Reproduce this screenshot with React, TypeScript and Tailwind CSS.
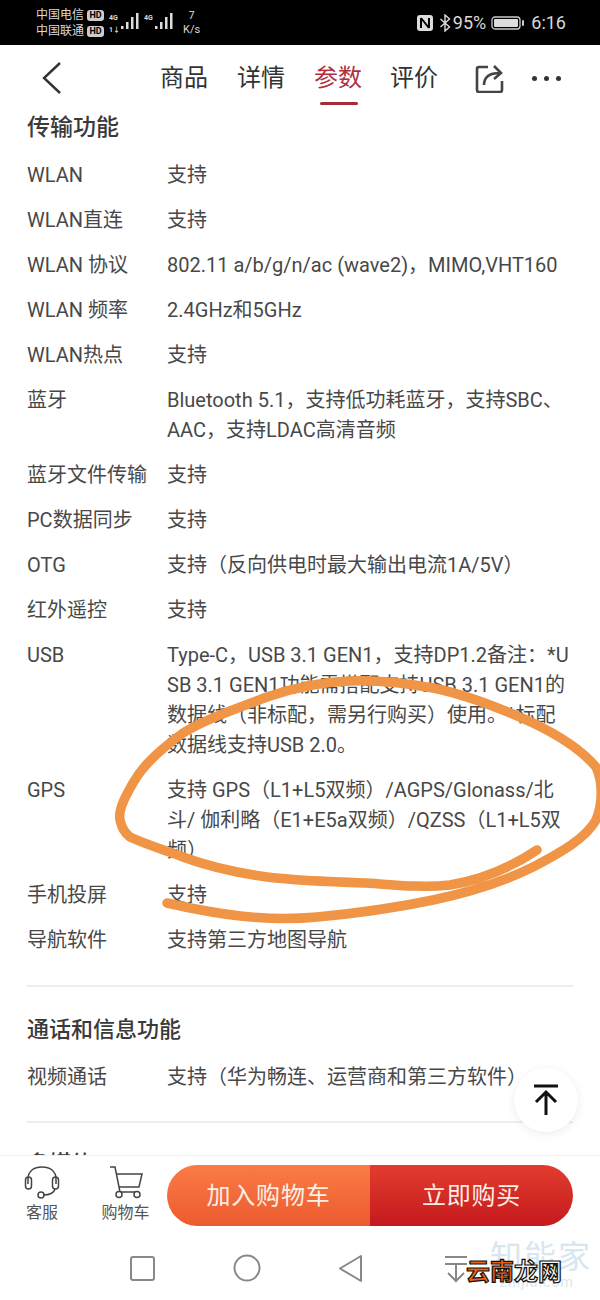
import React from 'react';

interface SpecRow {
  label: string;
  lines: string[];
}

const transferRows: SpecRow[] = [
  { label: 'WLAN', lines: ['支持'] },
  { label: 'WLAN直连', lines: ['支持'] },
  { label: 'WLAN 协议', lines: ['802.11 a/b/g/n/ac (wave2)，MIMO,VHT160'] },
  { label: 'WLAN 频率', lines: ['2.4GHz和5GHz'] },
  { label: 'WLAN热点', lines: ['支持'] },
  { label: '蓝牙', lines: ['Bluetooth 5.1，支持低功耗蓝牙，支持SBC、', 'AAC，支持LDAC高清音频'] },
  { label: '蓝牙文件传输', lines: ['支持'] },
  { label: 'PC数据同步', lines: ['支持'] },
  { label: 'OTG', lines: ['支持（反向供电时最大输出电流1A/5V）'] },
  { label: '红外遥控', lines: ['支持'] },
  {
    label: 'USB',
    lines: [
      'Type-C，USB 3.1 GEN1，支持DP1.2备注：*U',
      'SB 3.1 GEN1功能需搭配支持USB 3.1 GEN1的',
      '数据线（非标配，需另行购买）使用。*标配',
      '数据线支持USB 2.0。',
    ],
  },
  {
    label: 'GPS',
    lines: ['支持 GPS（L1+L5双频）/AGPS/Glonass/北', '斗/ 伽利略（E1+E5a双频）/QZSS（L1+L5双', '频）'],
  },
  { label: '手机投屏', lines: ['支持'] },
  { label: '导航软件', lines: ['支持第三方地图导航'] },
];

const Row: React.FC<{ row: SpecRow }> = ({ row }) => (
  <div className="flex text-[20px] leading-[30px] text-[#484848]">
    <div className="w-[140px] shrink-0 whitespace-nowrap">{row.label}</div>
    <div className="whitespace-nowrap">
      {row.lines.map((line) => (
        <div key={line}>{line}</div>
      ))}
    </div>
  </div>
);

const Signal = () => (
  <svg width="18" height="18" viewBox="0 0 18 18" className="ml-[1px] shrink-0">
    <rect x="0" y="14" width="2.5" height="3" fill="#ddd" />
    <rect x="5" y="10" width="2.5" height="7" fill="#ddd" />
    <rect x="10" y="5" width="2.5" height="12" fill="#ddd" />
    <rect x="15" y="1" width="2.5" height="16" fill="#ddd" />
  </svg>
);

const HdBadge = () => (
  <span className="ml-[3px] inline-block h-[11px] w-[17px] rounded-[3px] bg-[#cccccc] text-center text-[9px] font-bold leading-[11px] text-black">
    HD
  </span>
);

const StatusBar = () => (
  <div className="flex h-[45px] shrink-0 items-center bg-black pl-[36px] pr-[34px] text-[#d8d8d8]">
    <div className="mt-[1px] text-[12px] leading-[16px]">
      <div className="flex items-center">中国电信<HdBadge /></div>
      <div className="flex items-center">中国联通<HdBadge /></div>
    </div>
    <div className="ml-[5px] flex items-start text-[7px] font-bold leading-[8px]">
      <div className="w-[11px] pt-[2px]">
        <div>4G</div>
        <div className="mt-[4px]">1↓</div>
      </div>
      <Signal />
      <span className="ml-[5px] w-[10px] pt-[2px]">4G</span>
      <Signal />
    </div>
    <div className="ml-[10px] text-center text-[11px] leading-[14px]">
      <div>7</div>
      <div>K/s</div>
    </div>
    <div className="ml-auto flex items-center text-[18px]">
      <svg width="18" height="18" viewBox="0 0 18 18" className="mr-[5px]">
        <rect x="1" y="1" width="16" height="16" rx="3" fill="#ddd" />
        <path d="M5 4v10M5 4l8 10M13 4v10" stroke="#000" strokeWidth="2" fill="none" />
      </svg>
      <svg width="12" height="18" viewBox="0 0 12 18" className="mr-[2px]">
        <path d="M1.5 5l9 8-4.5 4V1l4.500 4-9 8" stroke="#ddd" strokeWidth="1.400" fill="none" />
      </svg>
      <span>95%</span>
      <svg width="34" height="14" viewBox="0 0 34 14" className="ml-[5px]">
        <rect x="1" y="1" width="28" height="12" rx="3" fill="none" stroke="#ccc" strokeWidth="1.300" />
        <rect x="3" y="3" width="24" height="8" rx="1" fill="#ddd" />
        <rect x="31" y="4" width="2" height="6" rx="1" fill="#ccc" />
      </svg>
      <span className="ml-[6px]">6:16</span>
    </div>
  </div>
);

const NavBar = () => (
  <div className="flex h-[60px] shrink-0 items-center bg-white pt-[6px] text-[24px] leading-none text-[#333333]">
    <svg width="22" height="34" viewBox="0 0 22 34" className="ml-[41px] shrink-0">
      <path d="M19 2 L3 17 L19 32" fill="none" stroke="#333" strokeWidth="2.400" />
    </svg>
    <span className="ml-[97px]">商品</span>
    <span className="ml-[29px]">详情</span>
    <span className="relative ml-[29px] text-[#b02f3c]">
      参数
      <span className="absolute left-[6px] top-[36px] h-[3px] w-[38px] rounded-full bg-[#a82c38]" />
    </span>
    <span className="ml-[28px]">评价</span>
    <svg width="30" height="30" viewBox="0 0 30 30" className="ml-[36px] shrink-0">
      <path d="M14 4H5a2 2 0 0 0-2 2v21a2 2 0 0 0 2 2h21a2 2 0 0 0 2-2v-9" fill="none" stroke="#444" strokeWidth="2.600" />
      <path d="M10 22c0-8 5-12 16-12M20 3l7 7-7 6" fill="none" stroke="#444" strokeWidth="2.600" />
    </svg>
    <div className="ml-[28px] flex gap-[7px]">
      <span className="h-[5px] w-[5px] rounded-full bg-[#333333]" />
      <span className="h-[5px] w-[5px] rounded-full bg-[#333333]" />
      <span className="h-[5px] w-[5px] rounded-full bg-[#333333]" />
    </div>
  </div>
);

const BottomBar = () => (
  <div className="flex h-[85px] shrink-0 items-start border-t border-[#eef0f6] bg-white pt-[9px]">
    <div className="flex w-[84px] flex-col items-center text-[16px] leading-[20px] text-[#555555]">
      <svg width="36" height="34" viewBox="0 0 36 34">
        <path d="M4 19V14C4 6 10 2 18 2s14 4 14 12v5" fill="none" stroke="#444" strokeWidth="1.500" />
        <rect x="1.500" y="12" width="6" height="12" rx="3" fill="none" stroke="#444" strokeWidth="1.500" />
        <rect x="28.500" y="12" width="6" height="12" rx="3" fill="none" stroke="#444" strokeWidth="1.500" />
        <path d="M31 24c-1 4-6 6-12 6" fill="none" stroke="#444" strokeWidth="1.500" />
        <circle cx="17" cy="30" r="3" fill="none" stroke="#444" strokeWidth="1.500" />
      </svg>
      <span className="mt-[4px]">客服</span>
    </div>
    <div className="flex w-[83px] flex-col items-center text-[16px] leading-[20px] text-[#555555]">
      <svg width="36" height="34" viewBox="0 0 36 34">
        <path d="M2 2h5l5 25h19M9 9h25l-3 13H11" fill="none" stroke="#444" strokeWidth="1.500" />
        <circle cx="11" cy="29.500" r="3" fill="#fff" stroke="#444" strokeWidth="1.500" />
        <circle cx="29" cy="29.500" r="3" fill="#fff" stroke="#444" strokeWidth="1.500" />
      </svg>
      <span className="mt-[4px]">购物车</span>
    </div>
    <div className="flex h-[61px] w-[406px] overflow-hidden rounded-full text-[24px] tracking-[0.8px] text-[#fdeee6]">
      <div className="flex w-[203px] items-center justify-center bg-gradient-to-b from-[#fa7b46] to-[#ec5a2e]">
        加入购物车
      </div>
      <div className="flex w-[203px] items-center justify-center bg-gradient-to-b from-[#e23b2e] to-[#c5181e]">
        立即购买
      </div>
    </div>
  </div>
);

const SystemNav = () => (
  <div className="relative h-[60px] shrink-0 bg-white">
    <svg width="600" height="60" viewBox="0 0 600 60" className="absolute left-0 top-0">
      <rect x="131" y="17" width="23" height="23" rx="2" fill="none" stroke="#888" strokeWidth="2" />
      <circle cx="247" cy="28" r="12.500" fill="none" stroke="#888" strokeWidth="2" />
      <path d="M361 16v25l-21-12.500z" fill="none" stroke="#888" strokeWidth="2" strokeLinejoin="round" />
      <path d="M445 17h22M445 24h22M456 24v16M448 33l8 8 8-8" fill="none" stroke="#888" strokeWidth="2" />
    </svg>
    <div className="absolute left-[490px] top-[1px] text-[32px] leading-none tracking-[2px] text-[#d8e6ee]">知能家</div>
    <div className="absolute left-[500px] top-[35px] text-[14px] leading-none tracking-[1px] text-[#dce8ee]">zhijia.com</div>
    <div className="absolute left-[466px] top-[20px] text-[24px] font-bold leading-none [-webkit-text-stroke:1.200px_#111111]">
      <span className="text-[#e8620f]">云南</span>
      <span className="text-[#f4f4f4]">龙网</span>
    </div>
  </div>
);

export default function App() {
  return (
    <div className="relative flex h-[1300px] w-[600px] flex-col overflow-hidden bg-white font-['Roboto','Noto_Sans_CJK_SC',sans-serif]">
      <StatusBar />
      <NavBar />

      <div className="min-h-0 flex-1 overflow-hidden px-[27px]">
        <h2 className="mt-[8px] text-[23px] font-medium leading-[30px] text-[#3a3a3a]">传输功能</h2>
        <div className="mt-[17px] flex flex-col gap-[15px]">
          {transferRows.map((row) => (
            <Row key={row.label} row={row} />
          ))}
        </div>
        <div className="mt-[30px] h-[2px] bg-[#eeeeee]" />
        <h2 className="mt-[28px] text-[22px] font-medium leading-[30px] text-[#3a3a3a]">通话和信息功能</h2>
        <div className="mt-[17px]">
          <Row row={{ label: '视频通话', lines: ['支持（华为畅连、运营商和第三方软件）'] }} />
        </div>
        <div className="mt-[29px] h-[2px] bg-[#eeeeee]" />
        <h2 className="mt-[26px] text-[22px] font-medium leading-[30px] text-[#3a3a3a]">多媒体</h2>
      </div>

      <BottomBar />
      <SystemNav />

      <button className="absolute left-[514px] top-[1068px] flex h-[64px] w-[64px] items-center justify-center rounded-full bg-white shadow-[0_2px_10px_rgba(0,0,0,0.08)]">
        <svg width="26" height="32" viewBox="0 0 26 32">
          <path d="M1 2h24M13 31V8M3 18L13 8l10 10" fill="none" stroke="#111" strokeWidth="3" />
        </svg>
      </button>

      {/* 手写圈注 */}
      <svg width="600" height="1300" viewBox="0 0 600 1300" className="pointer-events-none absolute left-0 top-0">
        <path
          d="M167 903C215 914 265 922 317 917C360 913 395 908 433 900C470 892 505 881 533 867C562 852 586 838 596 820C603 803 603 782 596 767C580 748 558 735 533 723C500 708 468 695 433 688C405 683 378 680 350 681C320 682 293 688 267 697C238 708 208 718 183 733C160 750 143 765 133 783C125 797 118 810 120 820C122 830 126 834 130 837C147 845 165 850 183 857C210 867 238 873 267 877C300 881 335 882 367 883C395 885 423 888 450 885C480 880 510 868 537 850"
          fill="none"
          stroke="#f09445"
          strokeWidth="9.500"
          strokeLinecap="round"
          strokeLinejoin="round"
        />
      </svg>
    </div>
  );
}
